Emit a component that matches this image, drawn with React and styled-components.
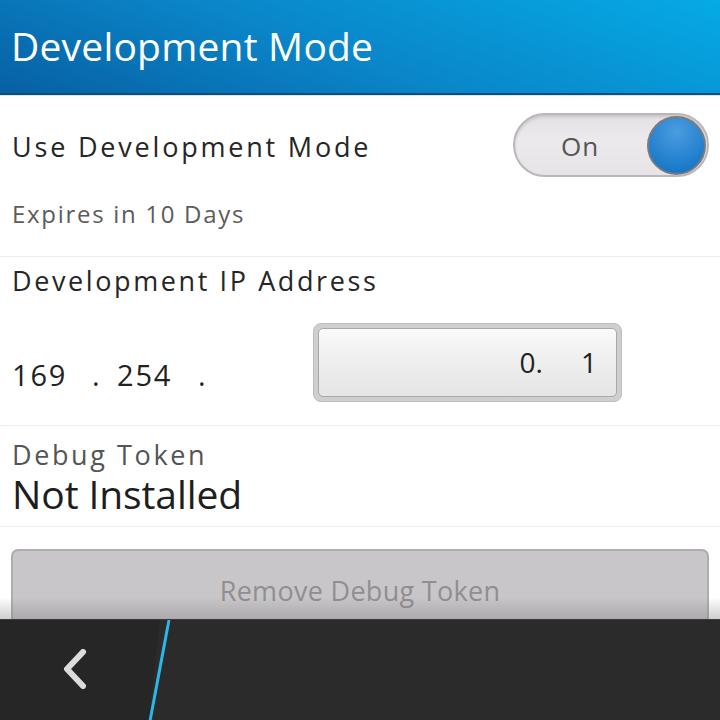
import React from "react";
import styled, { createGlobalStyle } from "styled-components";

const Global = createGlobalStyle`
  html, body { margin: 0; padding: 0; background: #fff; }
  body { width: 720px; height: 720px; overflow: hidden; font-family: "Open Sans", "Noto Sans", sans-serif; }
  * { box-sizing: border-box; }
`;

const Page = styled.div`
  width: 720px;
  height: 720px;
  display: flex;
  flex-direction: column;
  background: #fff;
  overflow: hidden;
`;

const Header = styled.header`
  height: 95px;
  flex: none;
  display: flex;
  align-items: center;
  padding: 0 0 2px 11px;
  background: linear-gradient(20deg, #0760a3 0%, #0a85c8 45%, #05aae6 100%);
  border-bottom: 2px solid #0b4f80;
  box-shadow: 0 1px 0 #e4e0e4;
`;

const Title = styled.h1`
  margin: 0;
  font-weight: 400;
  font-size: 39px;
  letter-spacing: 0.2px;
  color: #fff;
`;

const Content = styled.main`
  flex: 1;
  position: relative;
  overflow: hidden;
  display: flex;
  flex-direction: column;
`;

const Section = styled.section`
  display: flex;
  flex-direction: column;
  padding: ${(p) => p.$pad || "0 11px 0 12px"};
  border-bottom: 1px solid #efeaed;
`;

const ToggleRow = styled.div`
  display: flex;
  align-items: center;
  justify-content: space-between;
  height: 64px;
  margin-top: 18px;
`;

const Label = styled.div`
  font-size: ${(p) => p.$size || 27}px;
  color: ${(p) => p.$color || "#262626"};
  line-height: ${(p) => p.$lh || "36px"};
  letter-spacing: ${(p) => (p.$ls !== undefined ? p.$ls : 2.7)}px;
  margin-top: ${(p) => p.$mt || 0}px;
  padding-top: ${(p) => p.$pt || 0}px;
`;

const Toggle = styled.div`
  width: 196px;
  height: 64px;
  border-radius: 32px;
  border: 2px solid #b9b7b9;
  background: linear-gradient(#e2e0e2, #eceaec 40%, #e6e4e6);
  box-shadow: inset 0 2px 3px rgba(0, 0, 0, 0.12);
  display: flex;
  align-items: center;
  justify-content: space-between;
  padding: 0 1px 0 46px;
`;

const ToggleText = styled.span`
  font-size: 26px;
  letter-spacing: 1px;
  color: #555;
  margin-top: 2px;
`;

const Knob = styled.div`
  width: 59px;
  height: 59px;
  border-radius: 50%;
  border: 2px solid #7b7b7b;
  background: radial-gradient(circle at 50% 25%, #4a9de0 0%, #2a86d2 50%, #0c6ec1 100%);
`;

const IpRow = styled.div`
  display: flex;
  align-items: center;
  height: 79px;
  margin: 24px 0 23px;
`;

const IpNum = styled.span`
  font-size: 29px;
  letter-spacing: 1.8px;
  color: #222;
  margin-top: 24px;
  width: ${(p) => p.$w}px;
`;

const IpInput = styled.div`
  margin-left: auto;
  margin-right: 87px;
  width: 309px;
  height: 79px;
  border-radius: 8px;
  background: #d0ced0;
  border: 1px solid #bdbbbd;
  padding: 4px;
  display: flex;
`;

const IpInner = styled.div`
  flex: 1;
  border-radius: 5px;
  border: 1px solid #a9a7a9;
  background: linear-gradient(#fbfafb, #eeedee 55%, #e6e5e6);
  display: flex;
  align-items: center;
  justify-content: flex-end;
  padding: 0 19px 2px 0;
  gap: 38px;
  font-size: 28px;
  color: #222;
`;

const ButtonWrap = styled.div`
  padding: 22px 11px 0 11px;
`;

const Button = styled.button`
  width: 100%;
  height: 90px;
  border-radius: 7px;
  border: 2px solid #aeacae;
  background: #c9c6c9;
  color: #908e90;
  font-family: inherit;
  font-size: 27px;
  letter-spacing: 0.3px;
  padding: 0 0 8px;
  display: flex;
  justify-content: center;
  align-items: center;
`;

const Shade = styled.div`
  position: absolute;
  left: 0;
  right: 0;
  bottom: 0;
  height: 22px;
  background: linear-gradient(rgba(255,255,255,0), rgba(120,118,120,0.35));
  pointer-events: none;
`;

const ActionBar = styled.footer`
  height: 101px;
  flex: none;
  display: flex;
  background: #2b2b2b;
  border-top: 1px solid #3a3a3a;
  position: relative;
`;

const BackButton = styled.div`
  width: 160px;
  display: flex;
  align-items: center;
  justify-content: center;
  padding-right: 10px;
  padding-bottom: 2px;
  background: #262626;
  clip-path: polygon(0 0, 100% 0, 93% 100%, 0 100%);
`;

const Slash = styled.svg`
  position: absolute;
  left: 145px;
  top: 0;
`;

export default function App() {
  return (
    <Page>
      <Global />
      <Header>
        <Title>Development Mode</Title>
      </Header>
      <Content>
        <Section $pad="0 11px 20px 12px">
          <ToggleRow>
            <Label $pt={4} $ls={2.8}>Use Development Mode</Label>
            <Toggle>
              <ToggleText>On</ToggleText>
              <Knob />
            </Toggle>
          </ToggleRow>
          <Label $size={24} $color="#5c5c5c" $ls={1.7} $mt={14} $lh="45px">
            Expires in 10 Days
          </Label>
        </Section>
        <Section>
          <Label $mt={6} $ls={2.6}>Development IP Address</Label>
          <IpRow>
            <IpNum $w={80}>169</IpNum>
            <IpNum $w={25}>.</IpNum>
            <IpNum $w={81}>254</IpNum>
            <IpNum $w={20}>.</IpNum>
            <IpInput>
              <IpInner>
                <span>0.</span>
                <span>1</span>
              </IpInner>
            </IpInput>
          </IpRow>
        </Section>
        <Section $pad="12px 11px 10px 12px">
          <Label $color="#555" $lh="34px" $ls={2.6}>Debug Token</Label>
          <Label $size={39} $color="#1e1e1e" $lh="44px" $ls={-0.1}>
            Not Installed
          </Label>
        </Section>
        <ButtonWrap>
          <Button>Remove Debug Token</Button>
        </ButtonWrap>
        <Shade />
      </Content>
      <ActionBar>
        <BackButton>
          <svg width="30" height="40" viewBox="0 0 30 40">
            <path d="M23 3 L7 20 L23 37" fill="none" stroke="#dcdcdc" strokeWidth="6" strokeLinecap="round" strokeLinejoin="round" />
          </svg>
        </BackButton>
        <Slash width="30" height="101" viewBox="0 0 30 101">
          <line x1="24" y1="0" x2="5" y2="101" stroke="#2ab7ea" strokeWidth="3" />
        </Slash>
      </ActionBar>
    </Page>
  );
}
